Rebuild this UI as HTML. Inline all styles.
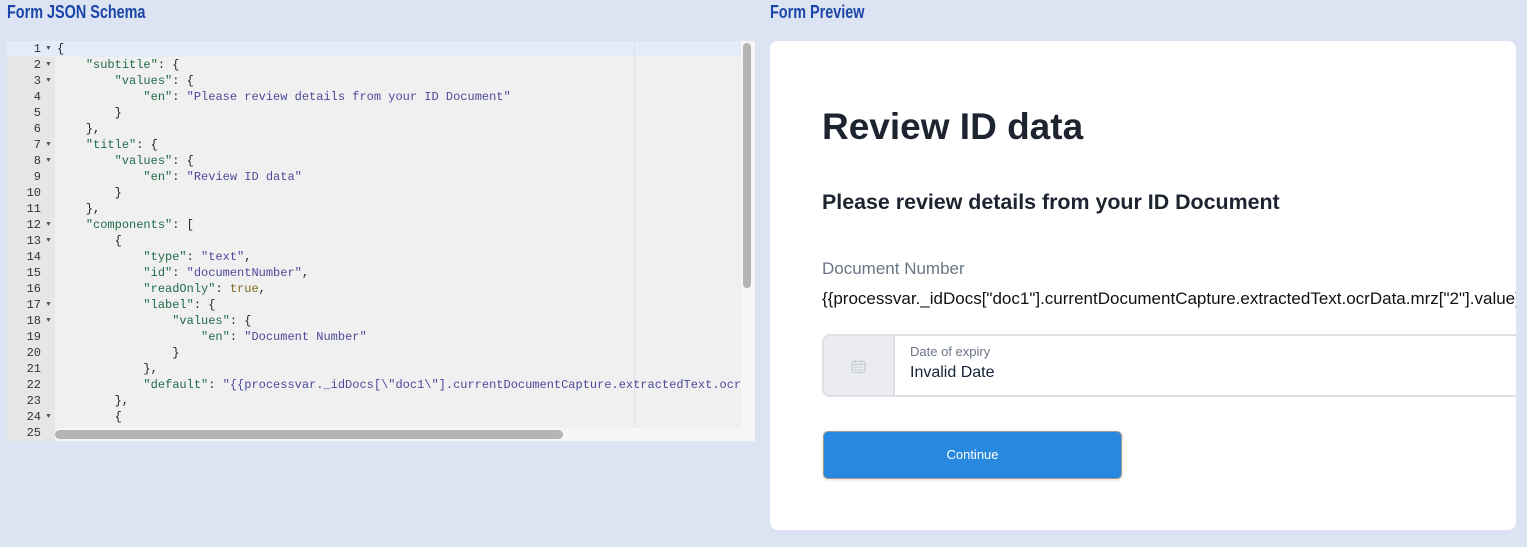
<!DOCTYPE html>
<html><head><style>
body{margin:0;width:1527px;height:547px;background:#dce3f2;position:relative;overflow:hidden;font-family:"Liberation Sans",sans-serif}
.h{position:absolute;top:2px;font-family:"Liberation Sans",sans-serif;font-weight:bold;font-size:18px;color:#1b46a8;transform:scaleX(0.8);transform-origin:0 0}
.ed{position:absolute;left:7px;top:41px;width:748px;height:400px;background:#f0f0f0;overflow:hidden}
.gut{position:absolute;left:0;top:0;width:48px;height:400px;background:#e6e6e6}
.act{position:absolute;left:0;top:0;width:748px;height:16px;background:#e3edfa}
.ln{position:absolute;left:0;width:34px;text-align:right;font:12px/16px "Liberation Mono",monospace;color:#333}
.fold{position:absolute;left:38px;font-size:7px;color:#555}
.code{position:absolute;left:50px;top:0;font:12px/16px "Liberation Mono",monospace;color:#222;white-space:pre}
.code .i{display:inline-block}
.k{color:#1f6b45}.s{color:#4a4a9a}.b{color:#7a6a1a}
.pm{position:absolute;left:627px;top:0;width:1px;height:388px;background:#e2e2e2}
.vs{position:absolute;left:734px;top:0;width:14px;height:400px;background:#f6f6f6}
.vt{position:absolute;left:736px;top:2px;width:8px;height:245px;background:#b5b5b5;border-radius:4px}
.hs{position:absolute;left:48px;top:387px;width:686px;height:13px;background:#f6f6f6}
.ht{position:absolute;left:48px;top:389px;width:508px;height:9px;background:#b5b5b5;border-radius:5px}
.card{position:absolute;left:770px;top:41px;width:746px;height:489px;background:#fff;border-radius:8px;overflow:hidden}
</style></head><body>
<div class="h" style="left:7px">Form JSON Schema</div>
<div class="h" style="left:770px">Form Preview</div>
<div class="ed">
<div class="gut"></div><div class="act"></div>
<div class="pm"></div>
<div class="ln" style="top:0">1</div><div class="ln" style="top:16px">2</div><div class="ln" style="top:32px">3</div><div class="ln" style="top:48px">4</div><div class="ln" style="top:64px">5</div><div class="ln" style="top:80px">6</div><div class="ln" style="top:96px">7</div><div class="ln" style="top:112px">8</div><div class="ln" style="top:128px">9</div><div class="ln" style="top:144px">10</div><div class="ln" style="top:160px">11</div><div class="ln" style="top:176px">12</div><div class="ln" style="top:192px">13</div><div class="ln" style="top:208px">14</div><div class="ln" style="top:224px">15</div><div class="ln" style="top:240px">16</div><div class="ln" style="top:256px">17</div><div class="ln" style="top:272px">18</div><div class="ln" style="top:288px">19</div><div class="ln" style="top:304px">20</div><div class="ln" style="top:320px">21</div><div class="ln" style="top:336px">22</div><div class="ln" style="top:352px">23</div><div class="ln" style="top:368px">24</div><div class="ln" style="top:384px">25</div>
<div class="fold" style="top:4px">▼</div><div class="fold" style="top:20px">▼</div><div class="fold" style="top:36px">▼</div><div class="fold" style="top:100px">▼</div><div class="fold" style="top:116px">▼</div><div class="fold" style="top:180px">▼</div><div class="fold" style="top:196px">▼</div><div class="fold" style="top:260px">▼</div><div class="fold" style="top:276px">▼</div><div class="fold" style="top:372px">▼</div>
<div class="code" style="word-spacing:0">{
    <span class="k">"subtitle"</span>: {
        <span class="k">"values"</span>: {
            <span class="k">"en"</span>: <span class="s">"Please review details from your ID Document"</span>
        }
    },
    <span class="k">"title"</span>: {
        <span class="k">"values"</span>: {
            <span class="k">"en"</span>: <span class="s">"Review ID data"</span>
        }
    },
    <span class="k">"components"</span>: [
        {
            <span class="k">"type"</span>: <span class="s">"text"</span>,
            <span class="k">"id"</span>: <span class="s">"documentNumber"</span>,
            <span class="k">"readOnly"</span>: <span class="b">true</span>,
            <span class="k">"label"</span>: {
                <span class="k">"values"</span>: {
                    <span class="k">"en"</span>: <span class="s">"Document Number"</span>
                }
            },
            <span class="k">"default"</span>: <span class="s">"{{processvar._idDocs[\"doc1\"].currentDocumentCapture.extractedText.ocr</span>
        },
        {
</div>
<div class="vs"></div><div class="vt"></div><div class="hs"></div><div class="ht"></div>
</div>
<div class="card">
<div style="position:absolute;left:52px;top:65px;font-size:37px;font-weight:bold;color:#1e2330">Review ID data</div>
<div style="position:absolute;left:52px;top:149px;font-size:21.4px;font-weight:bold;color:#1e2330">Please review details from your ID Document</div>
<div style="position:absolute;left:52px;top:218px;font-size:17px;color:#6b7585">Document Number</div>
<div style="position:absolute;left:52px;top:248px;font-size:17px;color:#111;white-space:nowrap">{{processvar._idDocs["doc1"].currentDocumentCapture.extractedText.ocrData.mrz["2"].value}}</div>
<div style="position:absolute;left:52px;top:293px;width:720px;height:59px;border:2px solid #dcdfe5;border-radius:8px;overflow:hidden">
 <div style="position:absolute;left:0;top:0;width:69px;height:59px;background:#eaecf1;border-right:2px solid #dcdfe5"></div>
 <svg style="position:absolute;left:27px;top:23px" width="15" height="15" viewBox="0 0 15 15"><rect x="1" y="2.5" width="13" height="11" rx="1.5" fill="none" stroke="#c8ccd4" stroke-width="1.3"/><line x1="1" y1="5.5" x2="14" y2="5.5" stroke="#c8ccd4" stroke-width="1.3"/><line x1="4.5" y1="1" x2="4.5" y2="3.5" stroke="#c8ccd4" stroke-width="1.3"/><line x1="10.5" y1="1" x2="10.5" y2="3.5" stroke="#c8ccd4" stroke-width="1.3"/><g fill="#c8ccd4"><rect x="3.5" y="7.5" width="2" height="1.6"/><rect x="6.5" y="7.5" width="2" height="1.6"/><rect x="9.5" y="7.5" width="2" height="1.6"/><rect x="3.5" y="10.2" width="2" height="1.6"/><rect x="6.5" y="10.2" width="2" height="1.6"/><rect x="9.5" y="10.2" width="2" height="1.6"/></g></svg>
 <div style="position:absolute;left:86px;top:8px;font-size:13px;color:#6b7585">Date of expiry</div>
 <div style="position:absolute;left:86px;top:28px;font-size:16px;color:#14233a">Invalid Date</div>
</div>
<div style="position:absolute;left:53px;top:390px;width:297px;height:46px;background:#2888e0;border:1px solid #a09a92;border-radius:5px;box-shadow:0 1px 3px rgba(200,160,120,.4);color:#fff;font-size:13px;text-align:center;line-height:46px">Continue</div>
</div>
</body></html>
